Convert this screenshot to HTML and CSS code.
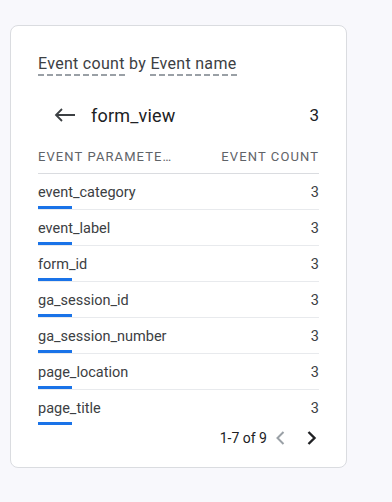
FILE: index.html
```html
<!DOCTYPE html>
<html lang="en">
<head>
    <meta charset="UTF-8">
    <meta name="viewport" content="width=device-width, initial-scale=1.0">
    <title>Event count by Event name</title>
    <link rel="stylesheet" href="styles.css">
</head>
<body>
    <div class="card">
        <h2 class="card-title"><span class="dotted">Event count</span> by <span class="dotted">Event name</span></h2>

        <div class="drill">
            <svg class="back" width="22" height="14" viewBox="0 0 22 14">
                <path d="M21 7H2M8 1L2 7l6 6" fill="none" stroke="#3c4043" stroke-width="1.8"/>
            </svg>
            <span class="drill-name">form_view</span>
            <span class="drill-count">3</span>
        </div>

        <div class="table">
            <div class="table-head">
                <span class="col-name">Event paramete…</span>
                <span class="col-count">Event count</span>
            </div>
            <div class="row">
                <div class="cell-name"><span>event_category</span><i class="bar"></i></div>
                <span class="cell-count">3</span>
            </div>
            <div class="row">
                <div class="cell-name"><span>event_label</span><i class="bar"></i></div>
                <span class="cell-count">3</span>
            </div>
            <div class="row">
                <div class="cell-name"><span>form_id</span><i class="bar"></i></div>
                <span class="cell-count">3</span>
            </div>
            <div class="row">
                <div class="cell-name"><span>ga_session_id</span><i class="bar"></i></div>
                <span class="cell-count">3</span>
            </div>
            <div class="row">
                <div class="cell-name"><span>ga_session_number</span><i class="bar"></i></div>
                <span class="cell-count">3</span>
            </div>
            <div class="row">
                <div class="cell-name"><span>page_location</span><i class="bar"></i></div>
                <span class="cell-count">3</span>
            </div>
            <div class="row">
                <div class="cell-name"><span>page_title</span><i class="bar"></i></div>
                <span class="cell-count">3</span>
            </div>
        </div>

        <div class="pager">
            <span class="pager-text">1-7 of 9</span>
            <svg class="pager-prev" width="10" height="14" viewBox="0 0 10 14">
                <path d="M8.5 1L2.5 7l6 6" fill="none" stroke="#9aa0a6" stroke-width="2"/>
            </svg>
            <svg class="pager-next" width="10" height="14" viewBox="0 0 10 14">
                <path d="M1.5 1l6 6-6 6" fill="none" stroke="#202124" stroke-width="2.4"/>
            </svg>
        </div>
    </div>
</body>
</html>
```

FILE: styles.css
```css
* {
    margin: 0;
    padding: 0;
    box-sizing: border-box;
}

body {
    font-family: Roboto, 'Noto Sans', sans-serif;
    background-color: #f8f8fc;
    color: #3c4043;
}

.card {
    margin: 25px 0 0 10px;
    width: 337px;
    height: 443px;
    background: #fff;
    border: 1px solid #dadce0;
    border-radius: 8px;
    padding: 27px 27px 0 27px;
}

.card-title {
    font-size: 16px;
    font-weight: 400;
    line-height: 22px;
    letter-spacing: 0.3px;
    color: #3c4043;
}

.dotted {
    padding-bottom: 3px;
    background-image: repeating-linear-gradient(90deg, #9aa0a6 0 6px, transparent 6px 9px);
    background-size: 100% 2px;
    background-position: 0 100%;
    background-repeat: no-repeat;
}

.drill {
    display: flex;
    align-items: center;
    margin-top: 27px;
    height: 26px;
}

.back {
    margin-left: 16px;
}

.drill-name {
    margin-left: 15px;
    font-size: 18px;
    letter-spacing: 0.2px;
    color: #202124;
    flex: 1;
}

.drill-count {
    font-size: 17px;
    color: #202124;
}

.table-head {
    display: flex;
    justify-content: space-between;
    margin-top: 21px;
    padding-bottom: 8px;
    border-bottom: 1px solid #dadce0;
    font-size: 13px;
    line-height: 16px;
    letter-spacing: 1.1px;
    text-transform: uppercase;
    color: #5f6368;
}

.row {
    display: flex;
    justify-content: space-between;
    padding-top: 9px;
    border-bottom: 1px solid #e8eaed;
    font-size: 14.5px;
    line-height: 20px;
}

.row:last-child {
    border-bottom: none;
}

.cell-name {
    display: flex;
    flex-direction: column;
}

.bar {
    display: block;
    width: 34px;
    height: 3px;
    margin-top: 3px;
    background: #1a73e8;
}

.cell-count {
    color: #3c4043;
}

.pager {
    display: flex;
    align-items: center;
    justify-content: flex-end;
    margin-top: 5px;
    font-size: 14px;
}

.pager-text {
    color: #202124;
}

.pager-prev {
    margin-left: 8px;
}

.pager-next {
    margin-left: 22px;
    margin-right: 2px;
}
```
